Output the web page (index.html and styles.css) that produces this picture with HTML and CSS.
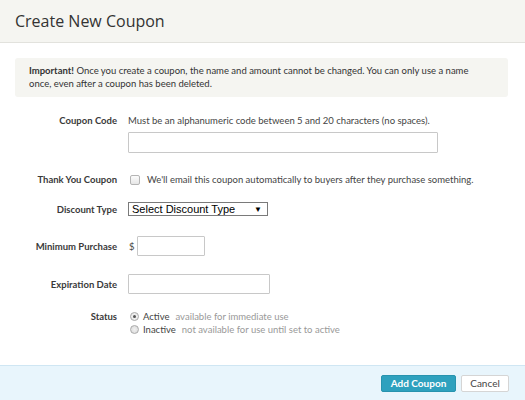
FILE: index.html
```html
<!DOCTYPE html>
<html>
<head>
<meta charset="utf-8">
<link rel="stylesheet" href="styles.css">
</head>
<body>
<div class="modal">
  <div class="header"><h1 class="title">Create New Coupon</h1></div>
  <div class="body">
    <div class="notice"><b>Important!</b> Once you create a coupon, the name and amount cannot be changed. You can only use a name once, even after a coupon has been deleted.</div>
    <div class="row row-code">
      <div class="label">Coupon Code</div>
      <div class="field">
        <div class="hint">Must be an alphanumeric code between 5 and 20 characters (no spaces).</div>
        <input class="input input-code" type="text">
      </div>
    </div>
    <div class="row row-thank">
      <div class="label">Thank You Coupon</div>
      <div class="field inline">
        <span class="checkbox"></span>
        <span class="hint">We'll email this coupon automatically to buyers after they purchase something.</span>
      </div>
    </div>
    <div class="row row-type">
      <div class="label">Discount Type</div>
      <div class="field">
        <div class="select"><span>Select Discount Type</span><span class="arrow">&#9660;</span></div>
      </div>
    </div>
    <div class="row row-min">
      <div class="label">Minimum Purchase</div>
      <div class="field inline">
        <span class="dollar">$</span>
        <input class="input input-min" type="text">
      </div>
    </div>
    <div class="row row-exp">
      <div class="label">Expiration Date</div>
      <div class="field">
        <input class="input input-exp" type="text">
      </div>
    </div>
    <div class="row row-status">
      <div class="label">Status</div>
      <div class="field radios">
        <div class="radio-line"><span class="radio checked"></span><span class="opt">Active</span><span class="desc">available for immediate use</span></div>
        <div class="radio-line"><span class="radio"></span><span class="opt">Inactive</span><span class="desc">not available for use until set to active</span></div>
      </div>
    </div>
  </div>
  <div class="footer">
    <button class="btn btn-primary">Add Coupon</button>
    <button class="btn btn-cancel">Cancel</button>
  </div>
</div>
</body>
</html>
```
FILE: styles.css
```css
html, body { margin: 0; padding: 0; background: #fff; }
body { font-family: Lato, "Liberation Sans", sans-serif; color: #333; width: 525px; height: 400px; overflow: hidden; }
.modal { display: flex; flex-direction: column; height: 400px; }
.header { height: 42px; background: #f5f5f1; border-bottom: 1px solid #e2e2dd; display: flex; align-items: center; padding-left: 15px; }
.title { margin: 0; font-family: "Open Sans", sans-serif; font-weight: 400; font-size: 16px; color: #333; }
.body { flex: 1; padding: 15px 17px 0 15px; }
.notice { background: #f5f5f1; border-radius: 3px; padding: 6px 32px 7px 14px; font-size: 9.5px; line-height: 13px; color: #333; }
.notice b { font-weight: 700; }
.row { display: flex; }
.label { width: 102px; text-align: right; font-size: 9.5px; font-weight: 700; color: #3a3a3a; padding-right: 11px; flex-shrink: 0; white-space: nowrap; }
.field { font-size: 9.5px; color: #444; }
.inline { display: flex; align-items: center; }
.hint { font-size: 9.5px; color: #444; white-space: nowrap; }
.row-code { margin-top: 17px; }
.row-code .label { line-height: 13px; }
.row-code .hint { line-height: 13px; margin-bottom: 5px; }
.input { display: block; box-sizing: border-box; border: 1px solid #c8c8c8; border-radius: 1px; background: #fff; margin: 0; padding: 0; }
.input-code { width: 310px; height: 21px; }
.row-thank { margin-top: 21px; align-items: center; }
.checkbox { width: 8px; height: 8px; border: 1px solid #b5b5b5; border-radius: 2px; background: linear-gradient(#fcfcfc, #e6e6e6); margin-left: 2px; margin-right: 7px; }
.row-type { margin-top: 17px; align-items: center; }
.select { box-sizing: border-box; width: 140px; height: 14px; border: 1px solid #7a7a7a; display: flex; align-items: center; justify-content: space-between; padding: 0 5px 0 3px; font-family: "Liberation Sans", Arial, sans-serif; font-size: 11px; color: #000; background: #fff; }
.arrow { font-size: 8px; }
.row-min { margin-top: 20px; align-items: center; }
.dollar { font-size: 9.5px; margin-left: 1px; margin-right: 2px; }
.input-min { width: 68px; height: 20px; }
.row-exp { margin-top: 18px; align-items: center; }
.input-exp { width: 142px; height: 20px; }
.row-status { margin-top: 16px; }
.radios { display: flex; flex-direction: column; }
.row-status .label { line-height: 13px; }
.radio-line { display: flex; align-items: center; height: 13px; }
.radio { width: 7px; height: 7px; border: 1px solid #aaa; border-radius: 50%; background: radial-gradient(#f0f0f0, #d8d8d8); margin-left: 2px; margin-right: 4px; position: relative; }
.radio.checked { background: #eee; }
.radio.checked::after { content: ""; position: absolute; left: 2px; top: 2px; width: 3px; height: 3px; border-radius: 50%; background: #555; }
.opt { color: #444; font-size: 9.5px; margin-right: 6px; }
.desc { color: #999; font-size: 9.5px; }
.footer { height: 34px; background: #e8f5fc; border-top: 1px solid #cfe6f3; display: flex; align-items: center; justify-content: flex-end; padding-right: 16px; gap: 5px; }
.btn { font-family: Lato, "Liberation Sans", sans-serif; font-size: 10px; height: 17px; border-radius: 2px; padding: 0; margin: 0; cursor: pointer; white-space: nowrap; }
.btn-primary { background: #2ea1be; color: #fff; border: 1px solid #2893ae; font-weight: 700; width: 75px; }
.btn-cancel { background: #fff; color: #444; border: 1px solid #d5d5d5; width: 48px; }
```
